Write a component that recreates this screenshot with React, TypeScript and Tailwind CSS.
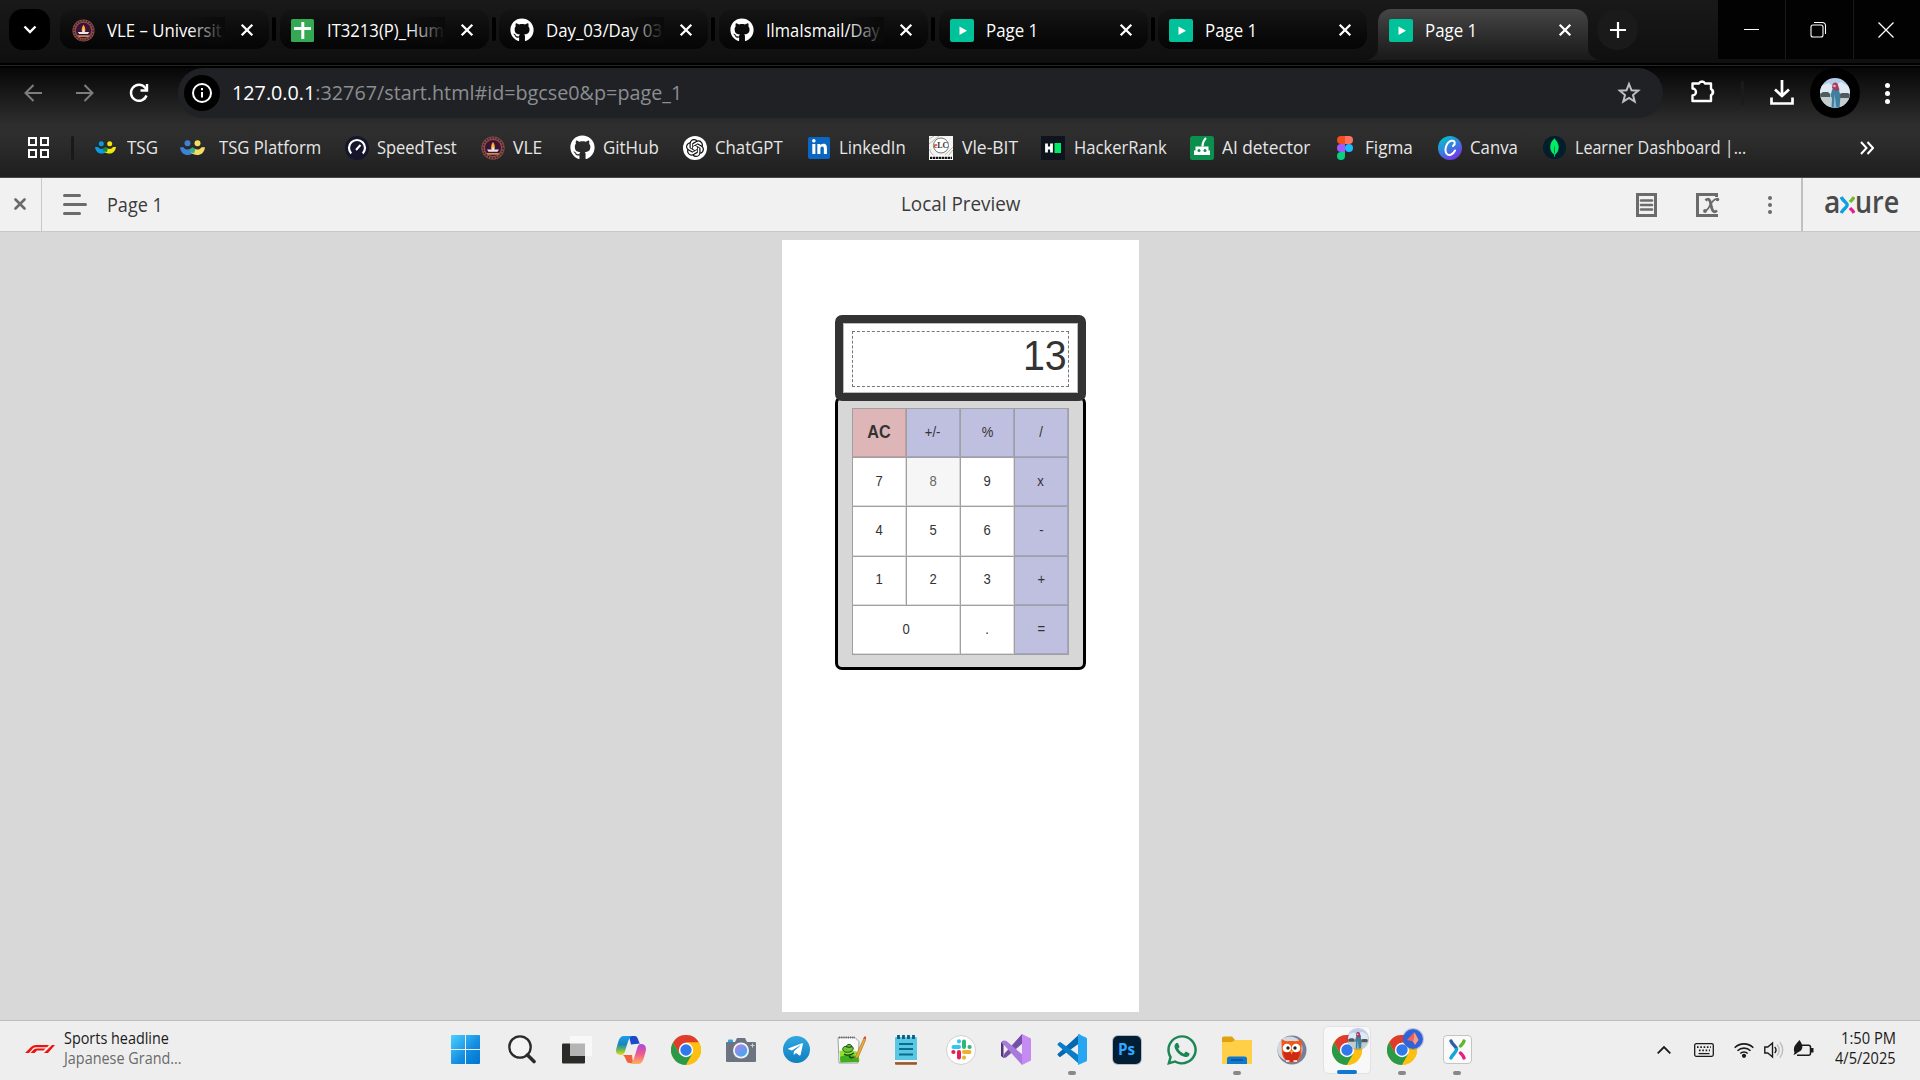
import React, { useLayoutEffect, useRef, useState } from "react";
import { FaGithub, FaLinkedinIn, FaTelegramPlane, FaWhatsapp } from "react-icons/fa";
import { SiOpenai, SiMongodb } from "react-icons/si";

/* Single-line label condensed or widened so it fills a given width. */
function Fit({ w, className = "", children }: { w: number; className?: string; children: React.ReactNode }) {
  const ref = useRef<HTMLSpanElement>(null);
  const [k, setK] = useState(1);
  useLayoutEffect(() => {
    const el = ref.current;
    if (el && el.offsetWidth) setK(w / el.offsetWidth);
  }, [w]);
  return (
    <span className={"inline-block shrink-0 whitespace-nowrap " + className} style={{ width: w }}>
      <span ref={ref} className="inline-block origin-left" style={{ transform: `scaleX(${k})` }}>
        {children}
      </span>
    </span>
  );
}

const Crest = ({ s = 24 }: { s?: number }) => (
  <svg width={s} height={s} viewBox="0 0 24 24">
    <circle cx="12" cy="12" r="11.6" fill="#8a5040" />
    <circle cx="12" cy="12" r="10" fill="none" stroke="#4a1c3c" strokeWidth="1.600" strokeDasharray="1.600 1.200" />
    <circle cx="12" cy="12" r="8" fill="#3d1238" />
    <path d="M12 6c1.800 2.500 2 4.500 1.800 7h-3.600c-.2-2.500 0-4.500 1.800-7z" fill="#ffb52e" />
    <path d="M6 13.500h4.500l1.500-3 1.500 3H18l-1.500 2.200h-9z" fill="#e8e4f0" />
    <path d="M5.500 17h13l-1.500 1.800H7z" fill="#c98a4a" />
  </svg>
);
const Sheets = () => (
  <svg width="23" height="23" viewBox="0 0 23 23">
    <rect width="23" height="23" rx="1.500" fill="#34a853" />
    <path d="M11.800 3v17M3 9.500h17" stroke="#fff" strokeWidth="3" />
  </svg>
);
const Play = () => (
  <svg width="24" height="23" viewBox="0 0 24 23">
    <rect width="24" height="23" rx="2" fill="#00c29a" />
    <path d="M9.500 7.500v8.500l7.500-4.200z" fill="#fff" />
  </svg>
);
const Cross = () => (
  <svg width="14" height="14" viewBox="0 0 14 14" className="shrink-0">
    <path d="M1.700 1.700l10.600 10.600M12.300 1.700L1.700 12.300" stroke="#fff" strokeWidth="2.300" />
  </svg>
);
const People = ({ a, b, c, s }: { a: string; b: string; c: string; s: number }) => (
  <svg width={s} height={s * 0.62} viewBox="0 0 21 13">
    <circle cx="6.300" cy="2.700" r="2.500" fill={a} />
    <circle cx="14.700" cy="2.700" r="2.500" fill={b} />
    <path d="M0 6h3c1.500 2.500 4.500 2.500 7.500.5l1.500 4C8 14 1 13.500 0 6z" fill={a} />
    <path d="M21 6h-3c-1.500 2.500-4.500 2.500-7.500.5L9 10.500C13 14 20 13.500 21 6z" fill={b} />
    <path d="M10.500 6l2.300 1.500-.8 3.500-3.500-.5-.5-2.500z" fill={c} />
  </svg>
);
const Chrome = () => (
  <svg width="30" height="30" viewBox="0 0 30 30">
    <circle cx="15" cy="15" r="15" fill="#fbbc05" />
    <path d="M2 7.500A15 15 0 0 1 28 7.500H15L8.500 18.700z" fill="#e03c2e" />
    <path d="M2 7.500A15 15 0 0 0 15 30l6.500-11.300h-13z" fill="#2a9948" />
    <path d="M15 30A15 15 0 0 0 28 7.500H15l6.500 11.300z" fill="#fdc010" />
    <circle cx="15" cy="15" r="7.200" fill="#fff" />
    <circle cx="15" cy="15" r="5.700" fill="#3079ed" />
  </svg>
);
const Portrait = ({ s }: { s: number }) => (
  <svg width={s} height={s} viewBox="0 0 30 30" className="rounded-full">
    <rect width="30" height="30" fill="#b4cdea" />
    <path d="M0 8l9-3 4 3 8-4 9 5v6H0z" fill="#dfe9f3" />
    <rect y="17" width="30" height="13" fill="#c3cdd0" />
    <path d="M0 16l3-2h5l2 2v3H0zM20 16l2-1h6l2 2v3H20z" fill="#4f5b5c" />
    <path d="M12 12c1-3 6-3 7 0l1.500 6-1 12h-8l.500-10-1.500-2z" fill="#3f7f9d" />
    <path d="M12.500 7c0-3 5-3.500 5.500 0l1.500 5-4 1-3.500-3z" fill="#a53a62" />
    <circle cx="14.500" cy="8" r="1.300" fill="#e2b9a0" />
    <path d="M14.500 16l-1 14h3z" fill="#84b7d1" />
  </svg>
);

const tabs: { icon: React.ReactNode; title: string; w: number; fade: boolean }[] = [
  { icon: <Crest s={23} />, title: "VLE – Universit", w: 115, fade: true },
  { icon: <Sheets />, title: "IT3213(P)_Hum", w: 117, fade: true },
  { icon: <FaGithub size={24} color="#fff" />, title: "Day_03/Day 03", w: 116, fade: true },
  { icon: <FaGithub size={24} color="#fff" />, title: "IlmaIsmail/Day", w: 114, fade: true },
  { icon: <Play />, title: "Page 1", w: 52, fade: false },
  { icon: <Play />, title: "Page 1", w: 52, fade: false },
];

function TabBody({ icon, title, w, fade }: { icon: React.ReactNode; title: string; w: number; fade: boolean }) {
  return (
    <>
      <span className="flex w-6 shrink-0 items-center justify-center">{icon}</span>
      <span className="relative ml-3 flex w-[118px] text-[17.500px] leading-[26px] text-white">
        <Fit w={w}>{title}</Fit>
        {fade && <span className="absolute right-0 top-0 h-full w-9 bg-gradient-to-r from-transparent to-[#0a0a0a]" />}
      </span>
      <span className="ml-[15px] flex">
        <Cross />
      </span>
    </>
  );
}

function TabStrip() {
  return (
    <div className="flex h-[63px] bg-gradient-to-b from-[#191919] to-[#0f0f0f]">
      <div className="ml-[9px] mt-[9px] flex h-[41px] w-[41px] items-center justify-center rounded-[14px] bg-black">
        <svg width="14" height="9" viewBox="0 0 14 9">
          <path d="M1.500 1.500L7 7l5.500-5.500" fill="none" stroke="#fff" strokeWidth="2.400" />
        </svg>
      </div>
      <div className="ml-[10px] mt-[9px] flex h-10">
        {tabs.map((t, i) => (
          <div key={i} className="flex w-[219.700px] items-center">
            <div className="flex h-10 w-[209px] items-center rounded-[13px] bg-gradient-to-b from-[#151515] to-[#050505] pl-[11px] pt-[2px]">
              <TabBody {...t} />
            </div>
            {i < 5 && <div className="ml-[3px] h-6 w-1 rounded-sm bg-black" />}
          </div>
        ))}
      </div>
      <div className="mt-[9px] flex h-[51px] items-end">
        <svg width="14" height="14" viewBox="0 0 14 14" className="-ml-[14px]">
          <path d="M14 0v14H0C9 14 14 8 14 0z" fill="#1b1b1b" />
        </svg>
        <div className="flex h-[51px] w-[210px] items-start rounded-t-[13px] bg-gradient-to-b from-[#464646] to-[#191919] pl-[11px]">
          <div className="flex h-[42px] items-center">
            <TabBody icon={<Play />} title="Page 1" w={52} fade={false} />
          </div>
        </div>
        <svg width="14" height="14" viewBox="0 0 14 14">
          <path d="M0 0v14h14C5 14 0 8 0 0z" fill="#1b1b1b" />
        </svg>
      </div>
      <div className="-ml-[5px] mt-[9px] flex h-[41px] w-[41px] items-center justify-center rounded-full bg-[#1a1a1a]">
        <svg width="16" height="16" viewBox="0 0 16 16">
          <path d="M8 0v16M0 8h16" stroke="#fff" strokeWidth="2.200" />
        </svg>
      </div>
      <div className="ml-auto flex h-[59px] w-[202px] gap-px bg-[#191919]">
        <div className="flex w-[67px] items-center justify-center bg-[#020202]">
          <div className="h-px w-[15px] bg-white" />
        </div>
        <div className="flex w-[67px] items-center justify-center bg-[#020202] pr-[2px]">
          <svg width="17" height="17" viewBox="0 0 17 17" fill="none" stroke="#fff" strokeWidth="1.100">
            <rect x="1" y="4" width="12" height="12" rx="2" />
            <path d="M4 1.500h8.500a3 3 0 0 1 3 3V13" />
          </svg>
        </div>
        <div className="flex flex-1 items-center justify-center bg-[#020202] pr-[2px]">
          <svg width="16" height="16" viewBox="0 0 16 16">
            <path d="M.5.5l15 15M15.500.5l-15 15" stroke="#fff" strokeWidth="1.300" />
          </svg>
        </div>
      </div>
    </div>
  );
}

function Toolbar() {
  return (
    <div className="flex h-[50px] items-center">
      <svg width="18" height="18" viewBox="0 0 18 18" className="ml-[24px]" fill="none" stroke="#7d7d7d" strokeWidth="2">
        <path d="M18 9H2M9.500 1L1.500 9l8 8" />
      </svg>
      <svg width="18" height="18" viewBox="0 0 18 18" className="ml-[34px]" fill="none" stroke="#7d7d7d" strokeWidth="2">
        <path d="M0 9h16M8.500 1l8 8-8 8" />
      </svg>
      <svg width="20" height="20" viewBox="0 0 20 20" className="ml-[35px]" fill="none" stroke="#fff" strokeWidth="2.400">
        <path d="M17.500 12.500A8 8 0 1 1 16 4.500l1.500 2" />
        <path d="M18 1v6.500h-6.500" />
      </svg>
      <div className="ml-[29px] flex h-[50px] w-[1485px] items-center rounded-full bg-[#202124] pl-[6px]">
        <div className="flex h-9 w-9 items-center justify-center rounded-full bg-black">
          <svg width="20" height="20" viewBox="0 0 20 20" fill="none" stroke="#fff" strokeWidth="2">
            <circle cx="10" cy="10" r="9" />
            <path d="M10 9v5.500M10 5v2.200" />
          </svg>
        </div>
        <div className="-mt-[2px] ml-3 text-[20.500px] leading-7 text-[#8b8e92]">
          <Fit w={450}>
            <span className="text-white">127.0.0.1</span>:32767/start.html#id=bgcse0&amp;p=page_1
          </Fit>
        </div>
        <svg width="24" height="24" viewBox="0 0 24 24" className="ml-auto mr-[22px]" fill="none" stroke="#c0c0c0" strokeWidth="2">
          <path d="M12 3l2.500 6.300 6.700.4-5.200 4.300 1.700 6.600-5.700-3.700-5.700 3.700L8 14 2.800 9.700l6.700-.4z" />
        </svg>
      </div>
      <svg width="26" height="26" viewBox="0 0 26 26" className="-mt-1 ml-[27px]">
        <path d="M2.500 5.500h6.500a3.300 3.300 0 0 1 6 0h6V11a3.200 3.200 0 0 1 0 6v6H2.500v-5.500a3.500 3.500 0 0 0 0-7z" fill="none" stroke="#fff" strokeWidth="2.400" strokeLinejoin="round" />
        <path d="M9 5a3.200 3.200 0 0 1 6 0zM21.500 11a3.200 3.200 0 0 1 0 6z" fill="#fff" />
      </svg>
      <div className="ml-[25px] h-6 w-[3px] rounded bg-[#1b1b1b]" />
      <svg width="24" height="26" viewBox="0 0 24 26" className="ml-[26px]" fill="none" stroke="#fff" strokeWidth="2.700">
        <path d="M12 0v15M5 9.500l7 6.500 7-6.500M1.500 17.500v6h21v-6" />
      </svg>
      <div className="ml-[16px] flex h-[50px] w-[50px] items-center justify-center rounded-full bg-black">
        <Portrait s={30} />
      </div>
      <div className="ml-[25px] flex flex-col gap-[3px]">
        <div className="h-[5px] w-[5px] rounded-full bg-white" />
        <div className="h-[5px] w-[5px] rounded-full bg-white" />
        <div className="h-[5px] w-[5px] rounded-full bg-white" />
      </div>
    </div>
  );
}

const SpeedIcon = () => (
  <svg width="24" height="24" viewBox="0 0 24 24">
    <circle cx="12" cy="12" r="12" fill="#15152c" />
    <path d="M6.200 17.500a8 8 0 1 1 11.600 0" fill="none" stroke="#fff" strokeWidth="2.200" />
    <path d="M11 14l4.500-5" stroke="#fff" strokeWidth="2" />
  </svg>
);
const GptIcon = () => (
  <span className="flex h-6 w-6 items-center justify-center rounded-full bg-white">
    <SiOpenai size={18} color="#111" />
  </span>
);
const LinkedinIcon = () => (
  <span className="flex h-[22px] w-[22px] items-center justify-center rounded-[2px] bg-[#0a66c2]">
    <FaLinkedinIn size={17} color="#fff" />
  </span>
);
const BitIcon = () => (
  <svg width="24" height="24" viewBox="0 0 24 24">
    <rect width="24" height="24" fill="#f4f4f2" />
    <path d="M0 3L5 0M0 8L10 0M16 19l8-8M19 20l5-6M1 13c0 4 3 7 8 8" stroke="#aaa" strokeWidth=".8" fill="none" />
    <circle cx="12" cy="9.500" r="7.500" fill="#fff" stroke="#777" />
    <text x="12" y="12" textAnchor="middle" className="font-['Liberation_Serif'] text-[8px] font-bold" fill="#333"><tspan fill="#b33">e</tspan>LC</text>
    <rect y="19.500" width="24" height="4.500" fill="#fff" />
    <path d="M1 21.800h22" stroke="#111" strokeWidth="2.300" strokeDasharray="2.400 .6" />
  </svg>
);
const RankIcon = () => (
  <svg width="24" height="24" viewBox="0 0 24 24">
    <rect width="24" height="24" fill="#0e141e" />
    <path d="M5.500 7.500v9M10.500 7.500v9M5 12h6" stroke="#fff" strokeWidth="2.800" />
    <rect x="13.500" y="7" width="6.500" height="10" fill="#00ea64" />
  </svg>
);
const RobotIcon = () => (
  <svg width="24" height="24" viewBox="0 0 24 24">
    <rect width="24" height="24" rx="2.500" fill="#0a8f4d" />
    <path d="M5.500 10.500h13v4H20V19H4v-4.500h1.500z" fill="#fff" />
    <path d="M12.500 10.500c0-4.500 1.500-6.500 3.500-8.500" stroke="#fff" strokeWidth="2.200" fill="none" />
    <circle cx="9" cy="14.500" r="1.500" fill="#0a8f4d" />
    <circle cx="15" cy="14.500" r="1.500" fill="#0a8f4d" />
  </svg>
);
const FigmaIcon = () => (
  <svg width="16" height="24" viewBox="0 0 16 24">
    <path d="M4 0h4v8H4a4 4 0 0 1 0-8z" fill="#f24e1e" />
    <path d="M8 0h4a4 4 0 0 1 0 8H8z" fill="#ff7262" />
    <path d="M4 8h4v8H4a4 4 0 0 1 0-8z" fill="#a259ff" />
    <circle cx="12" cy="12" r="4" fill="#1abcfe" />
    <path d="M4 16h4v4a4 4 0 1 1-4-4z" fill="#0acf83" />
  </svg>
);
const CanvaIcon = () => (
  <svg width="24" height="24" viewBox="0 0 24 24">
    <defs>
      <linearGradient id="cv" x1=".2" y1="0" x2=".8" y2="1">
        <stop offset="0" stopColor="#00c4cc" />
        <stop offset=".5" stopColor="#3a7be0" />
        <stop offset="1" stopColor="#7d2ae8" />
      </linearGradient>
    </defs>
    <circle cx="12" cy="12" r="12" fill="url(#cv)" />
    <path d="M15 10c3-2.500 2-6-1.500-5.200-5 1.200-7.500 9-5 12.700 2 2.700 6.500 1.500 8.500-3" fill="none" stroke="#fff" strokeWidth="2" strokeLinecap="round" />
  </svg>
);
const MongoIcon = () => (
  <span className="flex h-[23px] w-[23px] items-center justify-center rounded-full bg-[#001e2b]">
    <SiMongodb size={19} color="#00ed64" />
  </span>
);

const bookmarks: { icon: React.ReactNode; label: string; w: number; cell: string; text: string }[] = [
  { icon: <People s={21} a="#0a9be8" b="#f2e60c" c="#128a3c" />, label: "TSG", w: 31, cell: "w-[85px]", text: "ml-[11px]" },
  { icon: <People s={25} a="#3c82d8" b="#f6dc60" c="#2fae86" />, label: "TSG Platform", w: 102, cell: "w-[165px]", text: "ml-[14px]" },
  { icon: <SpeedIcon />, label: "SpeedTest", w: 80, cell: "w-[136px]", text: "ml-2" },
  { icon: <Crest />, label: "VLE", w: 29, cell: "w-[89px]", text: "ml-2" },
  { icon: <FaGithub size={25} color="#fff" />, label: "GitHub", w: 56, cell: "w-[113px]", text: "ml-2" },
  { icon: <GptIcon />, label: "ChatGPT", w: 68, cell: "w-[125px]", text: "ml-2" },
  { icon: <LinkedinIcon />, label: "LinkedIn", w: 67, cell: "w-[121px]", text: "ml-[9px]" },
  { icon: <BitIcon />, label: "Vle-BIT", w: 56, cell: "w-[112px]", text: "ml-[9px]" },
  { icon: <RankIcon />, label: "HackerRank", w: 93, cell: "w-[149px]", text: "ml-[9px]" },
  { icon: <RobotIcon />, label: "AI detector", w: 88, cell: "w-[147px]", text: "ml-2" },
  { icon: <FigmaIcon />, label: "Figma", w: 48, cell: "w-[101px]", text: "ml-3" },
  { icon: <CanvaIcon />, label: "Canva", w: 48, cell: "w-[105px]", text: "ml-2" },
  { icon: <MongoIcon />, label: "Learner Dashboard |...", w: 171, cell: "w-[203px]", text: "ml-[9px]" },
];

function Bookmarks() {
  return (
    <div className="flex h-[59px] items-center">
      <div className="ml-[28px] grid w-[21px] grid-cols-2 gap-[3px]">
        {[0, 1, 2, 3].map((i) => (
          <div key={i} className="h-[9px] border-2 border-white" />
        ))}
      </div>
      <div className="ml-[22px] mr-[21px] h-6 w-[3px] rounded bg-[#191919]" />
      {bookmarks.map((b) => (
        <div key={b.label} className={"flex shrink-0 items-center " + b.cell}>
          {b.icon}
          <Fit w={b.w} className={"-mt-[2px] text-[17.500px] leading-6 text-[#e6e6e6] " + b.text}>
            {b.label}
          </Fit>
        </div>
      ))}
      <svg width="14" height="14" viewBox="0 0 14 14" className="ml-[114px]" fill="none" stroke="#fff" strokeWidth="2">
        <path d="M1 1l5.500 6L1 13M7.500 1L13 7l-5.500 6" />
      </svg>
    </div>
  );
}

function AxureBar() {
  return (
    <div className="flex h-[54px] items-center border-b border-[#c8c8c8] bg-[#f1f1f1] text-[#3b3b3b]">
      <div className="flex h-full w-[42px] items-center justify-center border-r border-[#c8c8c8] pr-px">
        <svg width="12" height="12" viewBox="0 0 12 12" className="-mt-[2px]">
          <path d="M1.500 1.500l9 9M10.500 1.500l-9 9" stroke="#6b6b6b" strokeWidth="2.600" strokeLinecap="round" />
        </svg>
      </div>
      <div className="ml-[21px] flex w-6 flex-col gap-[6px]">
        <div className="h-[3px] w-[18px] rounded bg-[#6b6b6b]" />
        <div className="h-[3px] rounded bg-[#6b6b6b]" />
        <div className="h-[3px] w-[18px] rounded bg-[#6b6b6b]" />
      </div>
      <Fit w={56} className="ml-[20px] text-[20px] leading-6">Page 1</Fit>
      <Fit w={119} className="-mt-[2px] ml-[738px] text-[19.500px] leading-6">Local Preview</Fit>
      <svg width="21" height="24" viewBox="0 0 21 24" className="ml-auto" fill="none" stroke="#6b6b6b">
        <rect x="1.500" y="1.500" width="18" height="21" strokeWidth="3" />
        <path d="M5 7.500h11M5 12h11M5 16.500h11" strokeWidth="2.600" strokeLinecap="round" />
      </svg>
      <svg width="24" height="24" viewBox="0 0 24 24" className="ml-[39px]" fill="none" stroke="#6b6b6b">
        <path d="M20.500 4V1.500h-19v21h19V21" strokeWidth="3" />
        <path d="M9.500 7.500c3-3 4.500-1 5.500 4.500 1.200 6 2.500 8.500 6 5.500" strokeWidth="2.800" />
        <path d="M22 6.500c-3.500-1.500-5.500 1.500-7.500 5s-3.500 7.500-6.500 6.500" strokeWidth="1.800" />
        <circle cx="21.500" cy="6.500" r="1.800" fill="#6b6b6b" stroke="none" />
        <circle cx="9" cy="18" r="1.900" fill="#6b6b6b" stroke="none" />
      </svg>
      <div className="ml-[48px] flex flex-col gap-[3px]">
        <div className="h-1 w-1 rounded-full bg-[#6b6b6b]" />
        <div className="h-1 w-1 rounded-full bg-[#6b6b6b]" />
        <div className="h-1 w-1 rounded-full bg-[#6b6b6b]" />
      </div>
      <div className="ml-[29px] flex h-full w-[119px] items-center border-l-2 border-[#c0c0c0] pl-[21px] text-[30px] font-semibold leading-[34px] text-[#4a4a4a]">
        <Fit w={16} className="-mt-[5px]">a</Fit>
        <svg width="15" height="18" viewBox="0 0 15 18" fill="none" strokeWidth="3.400">
          <path d="M1.200 1c2 4.500 6 5.500 6 8s-4 3.500-6 8" stroke="#0e9fe0" />
          <path d="M14 1c-1 2.500-2.800 3.500-4 5" stroke="#76b82a" />
          <path d="M14 17c-1-2.500-2.800-3.500-4-5" stroke="#e91e8c" />
        </svg>
        <Fit w={44} className="-mt-[5px]">ure</Fit>
      </div>
    </div>
  );
}

const keys: { k: string; c: string }[] = [
  { k: "AC", c: "bg-[#dfb6b8] text-[18px] font-bold" },
  { k: "+/-", c: "bg-[#bfbfe0]" },
  { k: "%", c: "bg-[#bfbfe0]" },
  { k: "/", c: "bg-[#bfbfe0]" },
  { k: "7", c: "bg-white" },
  { k: "8", c: "bg-[#f6f6f6] text-[#666]" },
  { k: "9", c: "bg-white" },
  { k: "x", c: "bg-[#bfbfe0]" },
  { k: "4", c: "bg-white" },
  { k: "5", c: "bg-white" },
  { k: "6", c: "bg-white" },
  { k: "-", c: "bg-[#bfbfe0]" },
  { k: "1", c: "bg-white" },
  { k: "2", c: "bg-white" },
  { k: "3", c: "bg-white" },
  { k: "+", c: "bg-[#bfbfe0]" },
  { k: "0", c: "bg-white col-span-2" },
  { k: ".", c: "bg-white" },
  { k: "=", c: "bg-[#bfbfe0]" },
];

function Calculator() {
  return (
    <div className="mt-[75px] flex w-[251px] flex-col font-['Liberation_Sans',sans-serif] text-[#333]">
      <div className="z-10 h-[86px] rounded-[7px] border-8 border-[#333] bg-white">
        <div className="h-full border border-[#bbb] px-[8px] py-[7px]">
          <div className="flex h-[56px] w-[217px] justify-end border border-dashed border-[#777] pr-[1px] text-[42px] leading-[48px]">
            <Fit w={44}>13</Fit>
          </div>
        </div>
      </div>
      <div className="-mt-[5px] h-[274px] rounded-[7px] border-[3px] border-black bg-[#d7d7d7] pl-[14px] pt-[9px]">
        <div className="grid h-[247px] w-[217px] grid-cols-4 grid-rows-5 gap-px border border-[#a0a0a0] bg-[#a0a0a0] text-[14.500px]">
          {keys.map((b) => (
            <div key={b.k} className={"flex items-center justify-center border-b border-r border-[#0002] " + b.c}>
              <span className="scale-x-[0.9]">{b.k}</span>
            </div>
          ))}
        </div>
      </div>
    </div>
  );
}

const WinIcon = () => (
  <svg width="29" height="29" viewBox="0 0 29 29">
    <defs>
      <linearGradient id="wn" x1="0" y1="0" x2="29" y2="29" gradientUnits="userSpaceOnUse">
        <stop offset="0" stopColor="#4cd0ff" />
        <stop offset=".6" stopColor="#118be0" />
        <stop offset="1" stopColor="#0074d0" />
      </linearGradient>
    </defs>
    <path d="M0 1q0-1 1-1h13v14H0zM15 0h13q1 0 1 1v13H15zM0 15h14v14H1q-1 0-1-1zM15 15h14v13q0 1-1 1H15z" fill="url(#wn)" />
  </svg>
);
const SearchIcon = () => (
  <svg width="29" height="29" viewBox="0 0 29 29" className="ml-[1px]" fill="none" stroke="#2b2b2b">
    <circle cx="13" cy="12" r="10.700" strokeWidth="2.300" fill="#f4f4f4" />
    <path d="M20.500 20l6.500 6.500" strokeWidth="3.600" strokeLinecap="round" />
  </svg>
);
const TaskViewIcon = () => (
  <svg width="30" height="29" viewBox="0 0 30 29" className="ml-[2px]">
    <rect y="8.500" width="23" height="20" rx="1" fill="#2a2a28" />
    <rect x="8" y="1" width="22" height="20" rx="1" fill="#f8f8f8" />
    <path d="M8 8.500h15V21H8z" fill="#b5b5b5" />
  </svg>
);
const CopilotIcon = () => (
  <svg width="30" height="28" viewBox="0 0 30 28">
    <defs>
      <linearGradient id="cpa" x1="0" y1="0" x2="0" y2="1">
        <stop offset="0" stopColor="#1a9df0" />
        <stop offset=".45" stopColor="#1b87b8" />
        <stop offset=".7" stopColor="#5cb85c" />
        <stop offset="1" stopColor="#f2d51b" />
      </linearGradient>
      <linearGradient id="cpb" x1="0" y1="0" x2="0" y2="1">
        <stop offset="0" stopColor="#a24be0" />
        <stop offset=".5" stopColor="#ef5a90" />
        <stop offset="1" stopColor="#ffb25c" />
      </linearGradient>
    </defs>
    <path d="M13 0h6c3 0 3.500 6 5 7.500l-9 1z" fill="#1b4bcc" />
    <path d="M8 0h8c-3 1-4 6-6 12-1.500 5-2 7-5 7-4 0-6-2-4.500-7l2-7C3.500 2 5 0 8 0z" fill="url(#cpa)" />
    <path d="M7 19h9l1 8h-4c-3 0-3-6-6-8z" fill="#f2603c" />
    <path d="M22 28h-8c3-1 4-6 6-12 1.500-5 2-8 5-8 4 0 6 3 4.500 8l-2 7c-1 3-2.500 5-5.500 5z" fill="url(#cpb)" />
  </svg>
);
const CameraIcon = () => (
  <svg width="30" height="26" viewBox="0 0 30 26">
    <defs>
      <linearGradient id="cm" x1="0" y1="0" x2="1" y2="1">
        <stop offset="0" stopColor="#c07be8" />
        <stop offset="1" stopColor="#25b4f0" />
      </linearGradient>
    </defs>
    <rect x="2" y="2.500" width="5" height="4" rx="1" fill="#2aa5e0" />
    <path d="M1 5h8l2-4h8l2 4h8q1 0 1 1v18q0 1-1 1H1q-1 0-1-1V6q0-1 1-1z" fill="#6b7480" />
    <circle cx="15" cy="13.500" r="8" fill="#f5f5f5" />
    <circle cx="15" cy="13.500" r="6.200" fill="url(#cm)" />
    <path d="M26.500 6.500v4M24.500 8.500h4" stroke="#cdd3d8" />
  </svg>
);
const TelegramIcon = () => (
  <span className="flex h-[27px] w-[27px] items-center justify-center rounded-full bg-gradient-to-b from-[#2fa8e2] to-[#0f7fbe]">
    <FaTelegramPlane size={17} color="#fff" className="-ml-[2px]" />
  </span>
);
const NppIcon = () => (
  <svg width="29" height="28" viewBox="0 0 29 28">
    <path d="M1 1.500h17l4 4-1 21.500H2z" fill="#fbfbfb" stroke="#8a8a8a" strokeWidth=".8" />
    <path d="M2 1.500h16" stroke="#666" strokeWidth="1.800" strokeDasharray="1.200 1" />
    <path d="M2.500 15c6-2 13-1 18.500 1l1.500 9-19 1.500z" fill="#8fe030" />
    <path d="M3 21c6-3 13-2 18.500 0l.5 5-18.500.5z" fill="#3faf20" />
    <path d="M6 14c-1-2 1-4 3-3.500 1-2.500 5-3 6 0 2 1 1.500 4-1 5-3 1.500-7 1-8-1.500z" fill="#6cc53a" stroke="#1c4d12" />
    <path d="M9 10.500c2 1 4 1 6 0M7 18c3 2 7 1 10-1M12 20l2 2 3-1" stroke="#1c3d12" strokeWidth="1.200" fill="none" />
    <path d="M27 2l-8 17.500-1 4 3.500-3L29 3z" fill="#f0a93c" stroke="#a36a1a" strokeWidth=".6" />
    <path d="M26 2.500l2-2.500 1 1v2z" fill="#c94b4b" />
  </svg>
);
const NotepadIcon = () => (
  <svg width="22" height="30" viewBox="0 0 22 30">
    <rect y="2" width="22" height="26" rx="1" fill="#5ac8e2" />
    <path d="M0 25h22v2H0z" fill="#f3f3f3" />
    <path d="M0 27.200h22V29q0 .8-1 .8H1q-1 0-1-.8z" fill="#a3561b" />
    <path d="M3.500 0v4M8.500 0v4M13.500 0v4M18.500 0v4" stroke="#075d80" strokeWidth="2.800" />
    <path d="M4 9h14M4 14h14M4 19.500h14" stroke="#0a6c8e" strokeWidth="1.900" />
  </svg>
);
const SlackIcon = () => (
  <span className="flex h-[30px] w-[30px] items-center justify-center rounded-full border border-[#d0d0d0] bg-white">
    <svg width="21" height="21" viewBox="0 0 21 21" strokeWidth="4" strokeLinecap="round">
      <path d="M2.500 8H8" stroke="#36c5f0" />
      <path d="M8 2.300v.2" stroke="#36c5f0" />
      <path d="M13 2.500V8" stroke="#2eb67d" />
      <path d="M18.500 8h.2" stroke="#2eb67d" />
      <path d="M18.500 13H13" stroke="#ecb22e" />
      <path d="M13 18.500v.2" stroke="#ecb22e" />
      <path d="M8 18.500V13" stroke="#e01e5a" />
      <path d="M2.300 13h.2" stroke="#e01e5a" />
    </svg>
  </span>
);
const VsIcon = () => (
  <svg width="30" height="31" viewBox="0 0 30 31">
    <path d="M0 8.500L2.500 6.500v17.500L0 22z" fill="#53337e" />
    <path d="M2 24l1.500-4.500L21 0l2 8L5 23.500z" fill="#7650a8" />
    <path d="M0 8.500l3-2 2.500.5L23 22l-2 9L3 11z" fill="#a87add" />
    <path d="M21 0l9 4.500v22L21 31z" fill="#c48cf2" />
  </svg>
);
const CodeIcon = () => (
  <svg width="30" height="31" viewBox="0 0 30 31" strokeLinejoin="round">
    <path d="M1.500 20.500l1.500 1.500L22.500 8V1.500z" fill="#0668ae" stroke="#0668ae" strokeWidth="2" />
    <path d="M1.500 10.500L3 9l19.500 14v6z" fill="#0a7dc7" stroke="#0a7dc7" strokeWidth="2" />
    <path d="M21 0l8 3.500q1 .5 1 1.500v21q0 1-1 1.500L21 31z" fill="#26a5f2" />
  </svg>
);
const PsIcon = () => (
  <span className="flex h-[28px] w-[28px] items-center justify-center rounded-[5px] bg-[#001e36] text-[16px] font-bold leading-none text-[#31a8ff] ring-1 ring-[#bbb]">
    <Fit w={17} className="-mt-[2px]">Ps</Fit>
  </span>
);
const FolderIcon = () => (
  <svg width="30" height="28" viewBox="0 0 30 28">
    <path d="M0 2q0-1.500 1.500-1.500H10l3 3.500h17v10H0z" fill="#e0a10d" />
    <path d="M0 7q0-1 1-1h9l3-2h16q1 0 1 1v22q0 1-1 1H1q-1 0-1-1z" fill="#ffcf48" />
    <path d="M5 28v-5q0-2.500 2.500-2.500h15Q25 20.500 25 23v5z" fill="#0f78cf" />
    <path d="M9 24h12" stroke="#0a4f93" strokeWidth="1.400" />
  </svg>
);
const OwlIcon = () => (
  <svg width="30" height="30" viewBox="0 0 30 30">
    <circle cx="15" cy="15" r="14.500" fill="#77809a" />
    <circle cx="13" cy="14" r="12.500" fill="#d4d8e2" />
    <path d="M4.500 4c4 3 6 2 10 2s6 1 10-2c.5 4 0 7 0 15-1 6-5 8.500-9.500 8.500S6.500 25 5 19c-.5-8-.5-11-.5-15z" fill="#ee5a1c" />
    <path d="M6 17h17c-.5 7-4 10-8.500 10S7 24 6 17z" fill="#d02a14" />
    <circle cx="10" cy="13" r="4.300" fill="#fff" />
    <circle cx="19" cy="13" r="4.300" fill="#fff" />
    <circle cx="11" cy="13" r="1.700" fill="#222" />
    <circle cx="18" cy="13" r="1.700" fill="#222" />
    <path d="M12.800 15.500h3.600l-1.800 4z" fill="#f7a823" />
    <path d="M9 26h3.500M16.500 26H20" stroke="#fff" strokeWidth="1.500" />
  </svg>
);
const AxIcon = () => (
  <span className="flex h-[29px] w-[29px] items-center justify-center rounded-[4px] border border-[#c4c4c4] bg-[#fafafa]">
    <svg width="17" height="21" viewBox="0 0 17 21" fill="none" strokeWidth="3.400" strokeLinecap="round">
      <path d="M2 2c1.500 4 5 5 5.500 8" stroke="#2b5fa8" />
      <path d="M7.500 10.500C7 14 3.500 15 2 19" stroke="#12a5dc" />
      <path d="M15 2c-.8 2.500-2.200 3.500-3.500 5" stroke="#62b62e" />
      <path d="M15 19c-.8-2.500-2.200-3.500-3.500-5" stroke="#e51f86" />
    </svg>
  </span>
);
const ChromeWith = ({ children }: { children: React.ReactNode }) => (
  <span className="relative flex">
    <Chrome />
    <span className="absolute -right-[6px] -top-[6px] flex rounded-full ring-1 ring-[#55a]/30">{children}</span>
  </span>
);
const Sail = () => (
  <svg width="20" height="20" viewBox="0 0 20 20">
    <circle cx="10" cy="10" r="10" fill="#2f63d8" />
    <path d="M11.500 3l4 8-3.500 5-2-3.500z" fill="#ff9a80" />
    <path d="M11.500 3L10 12.500 4 11z" fill="#f2605c" />
  </svg>
);

const apps: { icon: React.ReactNode; state?: "open" | "active" }[] = [
  { icon: <WinIcon /> },
  { icon: <SearchIcon /> },
  { icon: <TaskViewIcon /> },
  { icon: <CopilotIcon /> },
  { icon: <Chrome /> },
  { icon: <CameraIcon /> },
  { icon: <TelegramIcon /> },
  { icon: <NppIcon /> },
  { icon: <NotepadIcon /> },
  { icon: <SlackIcon /> },
  { icon: <VsIcon /> },
  { icon: <CodeIcon />, state: "open" },
  { icon: <PsIcon /> },
  { icon: <FaWhatsapp size={34} color="#1b8755" /> },
  { icon: <FolderIcon />, state: "open" },
  { icon: <OwlIcon /> },
  { icon: <ChromeWith><Portrait s={20} /></ChromeWith>, state: "active" },
  { icon: <ChromeWith><Sail /></ChromeWith>, state: "open" },
  { icon: <AxIcon />, state: "open" },
];

function Taskbar() {
  return (
    <div className="flex h-[60px] items-center border-t border-[#bcbcbc] bg-[#eeeeee] pb-[2px] text-[15.500px] text-[#1a1a1a]">
      <svg width="30" height="8" viewBox="0 0 30 8" className="-mt-[1px] ml-[25px]" fill="#ee1310">
        <path d="M0 8L6 2Q8 0 11 0h13l-2 2.300H11Q9 2.300 8 3.300L4 8zM5.500 8l3.300-3.400Q10 3.500 12 3.500h8.500l-2 2H12L9.500 8zM19 8l8-8h3l-7 8z" />
      </svg>
      <div className="mb-[4px] ml-[9px] flex w-[374px] flex-col">
        <Fit w={105} className="leading-5">Sports headline</Fit>
        <Fit w={118} className="leading-5 text-[#6a6a6a]">Japanese Grand...</Fit>
      </div>
      {apps.map((a, i) => (
        <div key={i} className="flex h-full w-[55.100px] items-center justify-center">
          <div className={"relative flex h-12 w-12 items-center justify-center rounded-[5px] " + (a.state === "active" ? "border border-[#e2e2e2] bg-[#f8f8f8]" : "")}>
            {a.icon}
            {a.state === "open" && <span className="absolute -bottom-px h-1 w-2 rounded-full bg-[#888]" />}
            {a.state === "active" && <span className="absolute -bottom-px h-1 w-5 rounded-full bg-[#0f78d4]" />}
          </div>
        </div>
      ))}
      <svg width="14" height="8" viewBox="0 0 14 8" className="ml-auto" fill="none" stroke="#1a1a1a" strokeWidth="1.800">
        <path d="M.7 7.300L7 1l6.300 6.300" />
      </svg>
      <svg width="20" height="14" viewBox="0 0 20 14" className="ml-[23px]" fill="none" stroke="#1a1a1a" strokeWidth="1.300">
        <rect x=".7" y=".7" width="18.600" height="12.600" rx="1.500" />
        <path d="M3 4.200h14M5 7.400h11" strokeWidth="1.700" strokeDasharray="1.600 1.700" />
        <path d="M4.500 10.600h11" />
      </svg>
      <svg width="20" height="16" viewBox="0 0 20 16" className="ml-[20px]" fill="none" stroke="#1a1a1a" strokeWidth="1.600">
        <path d="M.7 5.800a13 13 0 0 1 18.600 0M3.500 8.800a9.200 9.200 0 0 1 13 0M6.300 11.500a5.300 5.300 0 0 1 7.400 0" />
        <circle cx="10" cy="13.800" r="1.300" fill="#1a1a1a" />
      </svg>
      <svg width="20" height="18" viewBox="0 0 20 18" className="ml-[10px]" fill="none" stroke="#1a1a1a" strokeWidth="1.400">
        <path d="M.8 6h3L8.500 2v14L3.800 12h-3z" />
        <path d="M10.700 6a4.500 4.500 0 0 1 0 6" />
        <path d="M13 3.500a8 8 0 0 1 0 11M15.800 1.200a12 12 0 0 1 0 15.600" stroke="#bdbdbd" />
      </svg>
      <svg width="21" height="17" viewBox="0 0 21 17" className="-mt-[3px] ml-[9px]">
        <path d="M9 5.200h6.500q2 0 2 2v6q0 2-2 2H4" fill="none" stroke="#1a1a1a" strokeWidth="1.500" />
        <path d="M18 8h2.500v4.500H18z" fill="#1a1a1a" />
        <path d="M6.500 0c3.500 5 3.500 8 1.500 10.500C6 12.500 4 12 3 14l-2.500 1 1-2.500C-.5 7 2.500 4.500 6.500 0z" fill="#1a1a1a" />
      </svg>
      <div className="mb-[4px] ml-[21px] mr-[24px] flex flex-col items-end">
        <Fit w={55} className="leading-5">1:50 PM</Fit>
        <Fit w={61} className="leading-5">4/5/2025</Fit>
      </div>
    </div>
  );
}

export default function App() {
  return (
    <div className="flex h-[1080px] w-[1920px] flex-col overflow-hidden bg-[#d8d8d8] font-['Open_Sans','Noto_Sans',sans-serif]">
      <TabStrip />
      <div className="h-[5px] border-y-2 border-black bg-[#242424]" />
      <div className="flex h-[110px] flex-col border-b border-[#484848] bg-[linear-gradient(to_bottom,#070707_0%,#2e2e2e_52%,#2c2c2c_68%,#1e1e1e_100%)]">
        <Toolbar />
        <Bookmarks />
      </div>
      <AxureBar />
      <div className="flex h-[788px] flex-col items-center pl-px pt-2">
        <div className="flex h-[772px] w-[357px] flex-col items-center bg-white">
          <Calculator />
        </div>
      </div>
      <Taskbar />
    </div>
  );
}
